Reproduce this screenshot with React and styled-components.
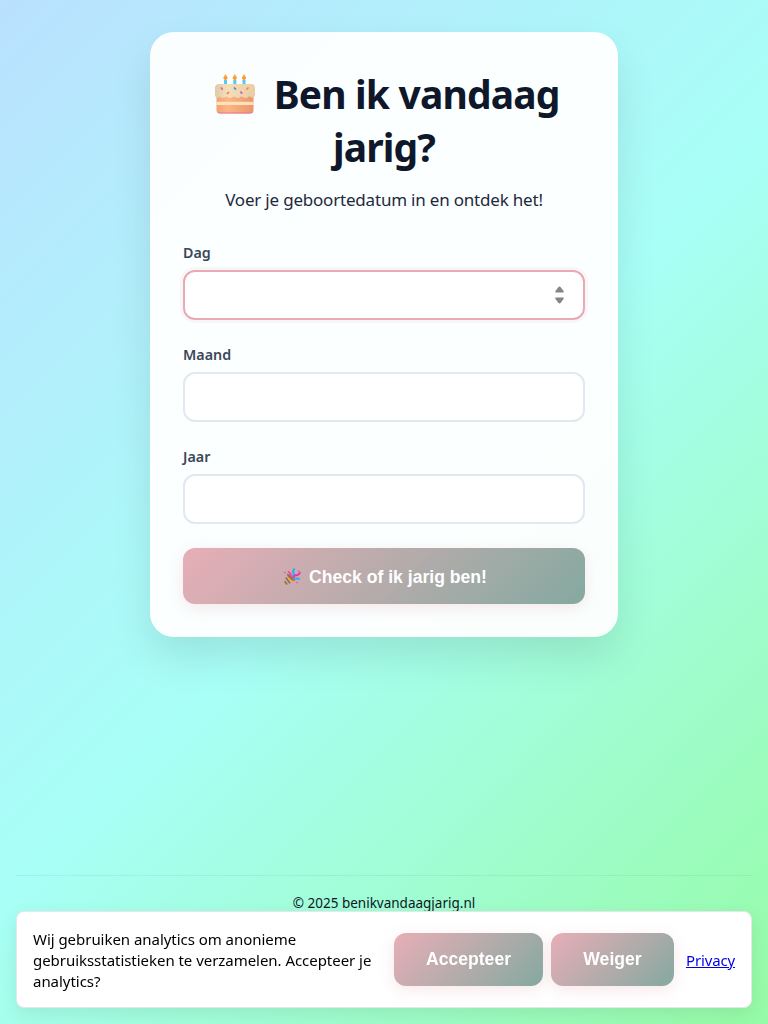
import React from 'react';
import styled, { createGlobalStyle, css } from 'styled-components';

const GlobalStyle = createGlobalStyle`
  * { box-sizing: border-box; }
  html, body { margin: 0; padding: 0; }
  body { font-family: "Noto Sans", "Open Sans", sans-serif; color: #0f172a; }
`;

const Page = styled.div`
  min-height: 1024px;
  padding: 32px 16px 0;
  display: flex;
  flex-direction: column;
  align-items: center;
  background: linear-gradient(135deg, #bae1ff 0%, #a8fff7 50%, #96fba6 100%);
`;

const Card = styled.main`
  width: 468px;
  height: 605px;
  padding: 33px;
  border-radius: 24px;
  background: rgba(255, 255, 255, 0.95);
  box-shadow: 0 20px 40px rgba(0, 0, 0, 0.1);
`;

const Title = styled.h1`
  margin: 0;
  padding-top: 2px;
  font-size: 39px;
  line-height: 53px;
  font-weight: 700;
  text-align: center;
  letter-spacing: -0.85px;
  color: #0f172a;
`;

const CakeIcon = styled.svg`
  width: 42px;
  height: 42px;
  margin: 0 8px 0 6px;
  vertical-align: -7px;
`;

const Subtitle = styled.p`
  margin: 15px 0 0;
  font-size: 17px;
  line-height: 24px;
  letter-spacing: -0.2px;
  text-align: center;
  color: #1e293b;
`;

const Form = styled.form`
  margin-top: 30px;
  display: flex;
  flex-direction: column;
`;

const Field = styled.div`
  height: 102px;
`;

const Label = styled.label`
  display: block;
  height: 28px;
  line-height: 21px;
  font-size: 14.3px;
  font-weight: 600;
  color: #3b4759;
`;

const InputBox = styled.div`
  height: 50px;
  display: flex;
  align-items: center;
  justify-content: flex-end;
  padding-right: 18px;
  border: 2px solid #e2e8f0;
  border-radius: 12px;
  background: #fff;
  ${(p) => p.$focused && css`
    border-color: #e8aab5;
    box-shadow: 0 0 0 3px rgba(232, 170, 181, 0.1);
  `}
`;

const Spinner = styled.svg`
  width: 11px;
  height: 18px;
`;

const Button = styled.button`
  display: flex;
  align-items: center;
  justify-content: center;
  gap: 8px;
  flex: none;
  width: ${(p) => p.$width};
  height: ${(p) => p.$height};
  padding: ${(p) => p.$padding || '0'};
  border: 0;
  border-radius: 12px;
  background: linear-gradient(135deg, #e8aeb7 0%, #84a9a0 100%);
  box-shadow: 0 4px 15px rgba(232, 174, 183, 0.3);
  font: 700 17.6px "Liberation Sans", Arial, sans-serif;
  color: #fff;
`;

const Footer = styled.footer`
  width: 100%;
  height: 149px;
  margin-top: auto;
  padding-top: 17px;
  border-top: 1px solid rgba(0, 0, 0, 0.05);
  font-size: 13.5px;
  line-height: 20px;
  text-align: center;
  color: #0f172a;
`;

const Banner = styled.aside`
  position: fixed;
  left: 16px;
  right: 16px;
  bottom: 16px;
  height: 97px;
  padding: 0 16px;
  display: flex;
  align-items: center;
  border: 1px solid #e5e7eb;
  border-radius: 8px;
  background: #fff;
  box-shadow: 0 6px 18px rgba(0, 0, 0, 0.08);
  color: #000;
`;

const BannerText = styled.div`
  width: 361px;
  flex: none;
  padding-top: 1px;
  font-size: 15px;
  line-height: 21px;
  letter-spacing: -0.04px;
  white-space: nowrap;
`;

const Actions = styled.div`
  display: flex;
  gap: 8px;
`;

const PrivacyLink = styled.a`
  margin-left: 12px;
  padding-top: 1px;
  font-size: 15px;
  line-height: 21px;
  letter-spacing: -0.15px;
  color: #0000ee;
  text-decoration: underline;
`;

function Cake() {
  return (
    <CakeIcon viewBox="0 0 42 42" aria-hidden="true">
      <defs>
        <linearGradient id="sponge" x1="0" x2="1">
          <stop offset="0" stopColor="#f0a374" />
          <stop offset=".3" stopColor="#fbb686" />
          <stop offset="1" stopColor="#e9976c" />
        </linearGradient>
        <linearGradient id="icing" x1="0" x2="1">
          <stop offset="0" stopColor="#e2c8a5" />
          <stop offset=".3" stopColor="#f5debb" />
          <stop offset="1" stopColor="#ebcca7" />
        </linearGradient>
      </defs>
      {[11.5, 20.8, 30].map((x) => (
        <g key={x}>
          <rect x={x - 1.5} y="6" width="3" height="6" fill="#5bc8ed" />
          <path d={`M${x} 0 C${x + 1} 2 ${x + 2.1} 2.5 ${x + 2.1} 4 C${x + 2.1} 6.5 ${x - 2.1} 6.5 ${x - 2.1} 4 C${x - 2.1} 2.5 ${x - 1} 2 ${x} 0Z`} fill="#f8ad32" />
          <circle cx={x} cy="4.6" r="1" fill="#ff8150" />
        </g>
      ))}
      <path d="M2.5 19H39.5V36Q39.5 39.5 36 39.5H6Q2.5 39.5 2.5 36Z" fill="url(#sponge)" />
      <path d="M3 37Q3.5 39.6 6 39.6H36Q38.7 39.6 39.2 37Q38 38.6 36 38.6H6Q4 38.6 3 37Z" fill="#e57994" />
      <rect x="2.5" y="27.8" width="37" height="3.2" fill="#ffe1b9" />
      <path d="M1 14Q1 10 5 10H37Q41 10 41 14V20.5Q41 23.5 38.5 23.5Q36.5 23.5 35.5 22Q34 24 31.5 24Q29 24 27.5 22.3Q26 24 23.5 24Q21.5 24 20 22.3Q18.5 24 16 24Q14 24 12.5 22.3Q11 24 8.5 24Q7 24 6 22.5Q5 23.7 3.5 23.7Q1 23.5 1 20.5Z" fill="url(#icing)" />
      <g strokeWidth="1.7" strokeLinecap="round">
        <path d="M7.3 14l1 1.2M26.8 18.2l1 1" stroke="#ce61be" />
        <path d="M20.5 14l1 1" stroke="#4d7fdc" />
        <path d="M13.5 19.4l1-1M33 15l1-1" stroke="#ef8440" />
      </g>
    </CakeIcon>
  );
}

function Party() {
  return (
    <svg width="18" height="18" viewBox="0 0 18 18" aria-hidden="true">
      <path d="M4 6L.7 15.8Q.3 17.6 2.1 17.2L11.8 13Q8.2 11 4 6Z" fill="#efaf3f" />
      <path d="M2.8 9.6L7 15.2M1.6 13.2L4.2 16.4" stroke="#6f6bb8" strokeWidth="1.6" />
      <path d="M4 6Q5.6 5.2 8.8 8.4T11.8 13Q10 13.6 6.8 10.6T4 6Z" fill="#a86a4c" />
      <path d="M7.8 8Q8.6 5.8 5 3.4" stroke="#f03fa8" strokeWidth="1.7" fill="none" />
      <path d="M9 8.6Q12 6.4 10.2 4.4Q9.6 2 11.8 .8" stroke="#35a9ed" strokeWidth="2.1" fill="none" />
      <path d="M10.2 10Q12 6.6 13.8 7.2T17.2 4.2" stroke="#ed35a1" strokeWidth="2" fill="none" />
      <path d="M10.8 11.6Q13.2 9.6 16.8 11.2" stroke="#3ea6e8" strokeWidth="2" fill="none" />
      <circle cx="2" cy="4.6" r=".8" fill="#e34ba1" />
      <circle cx="6.4" cy="1.4" r=".7" fill="#f5b03c" />
      <circle cx="15.6" cy="3" r=".8" fill="#e34ba1" />
      <circle cx="14" cy="14.6" r=".8" fill="#ec4eaa" />
    </svg>
  );
}

export default function App() {
  return (
    <>
      <GlobalStyle />
      <Page>
        <Card>
          <Title><Cake /> Ben ik vandaag<br />jarig?</Title>
          <Subtitle>Voer je geboortedatum in en ontdek het!</Subtitle>
          <Form>
            <Field>
              <Label>Dag</Label>
              <InputBox $focused>
                <Spinner viewBox="0 0 11 18">
                  <path d="M5.5 0.5Q6.2 .5 6.7 1.2L9.7 5.2Q10.2 6.5 9 6.5H2Q.8 6.5 1.3 5.2L4.3 1.2Q4.8 .5 5.5 .5ZM5.5 17.5Q4.8 17.5 4.3 16.8L1.3 12.8Q.8 11.5 2 11.5H9Q10.2 11.5 9.7 12.8L6.7 16.8Q6.2 17.5 5.5 17.5Z" fill="#858585" />
                </Spinner>
              </InputBox>
            </Field>
            <Field>
              <Label>Maand</Label>
              <InputBox />
            </Field>
            <Field>
              <Label>Jaar</Label>
              <InputBox />
            </Field>
            <Button type="button" $width="100%" $height="56px" $padding="2px 0 0 2px"><Party />Check of ik jarig ben!</Button>
          </Form>
        </Card>
        <Footer>© 2025 benikvandaagjarig.nl</Footer>
      </Page>
      <Banner>
        <BannerText>
          Wij gebruiken analytics om anonieme<br />
          gebruiksstatistieken te verzamelen. Accepteer je<br />
          analytics?
        </BannerText>
        <Actions>
          <Button type="button" $width="149px" $height="53px">Accepteer</Button>
          <Button type="button" $width="123px" $height="53px">Weiger</Button>
        </Actions>
        <PrivacyLink href="#">Privacy</PrivacyLink>
      </Banner>
    </>
  );
}
